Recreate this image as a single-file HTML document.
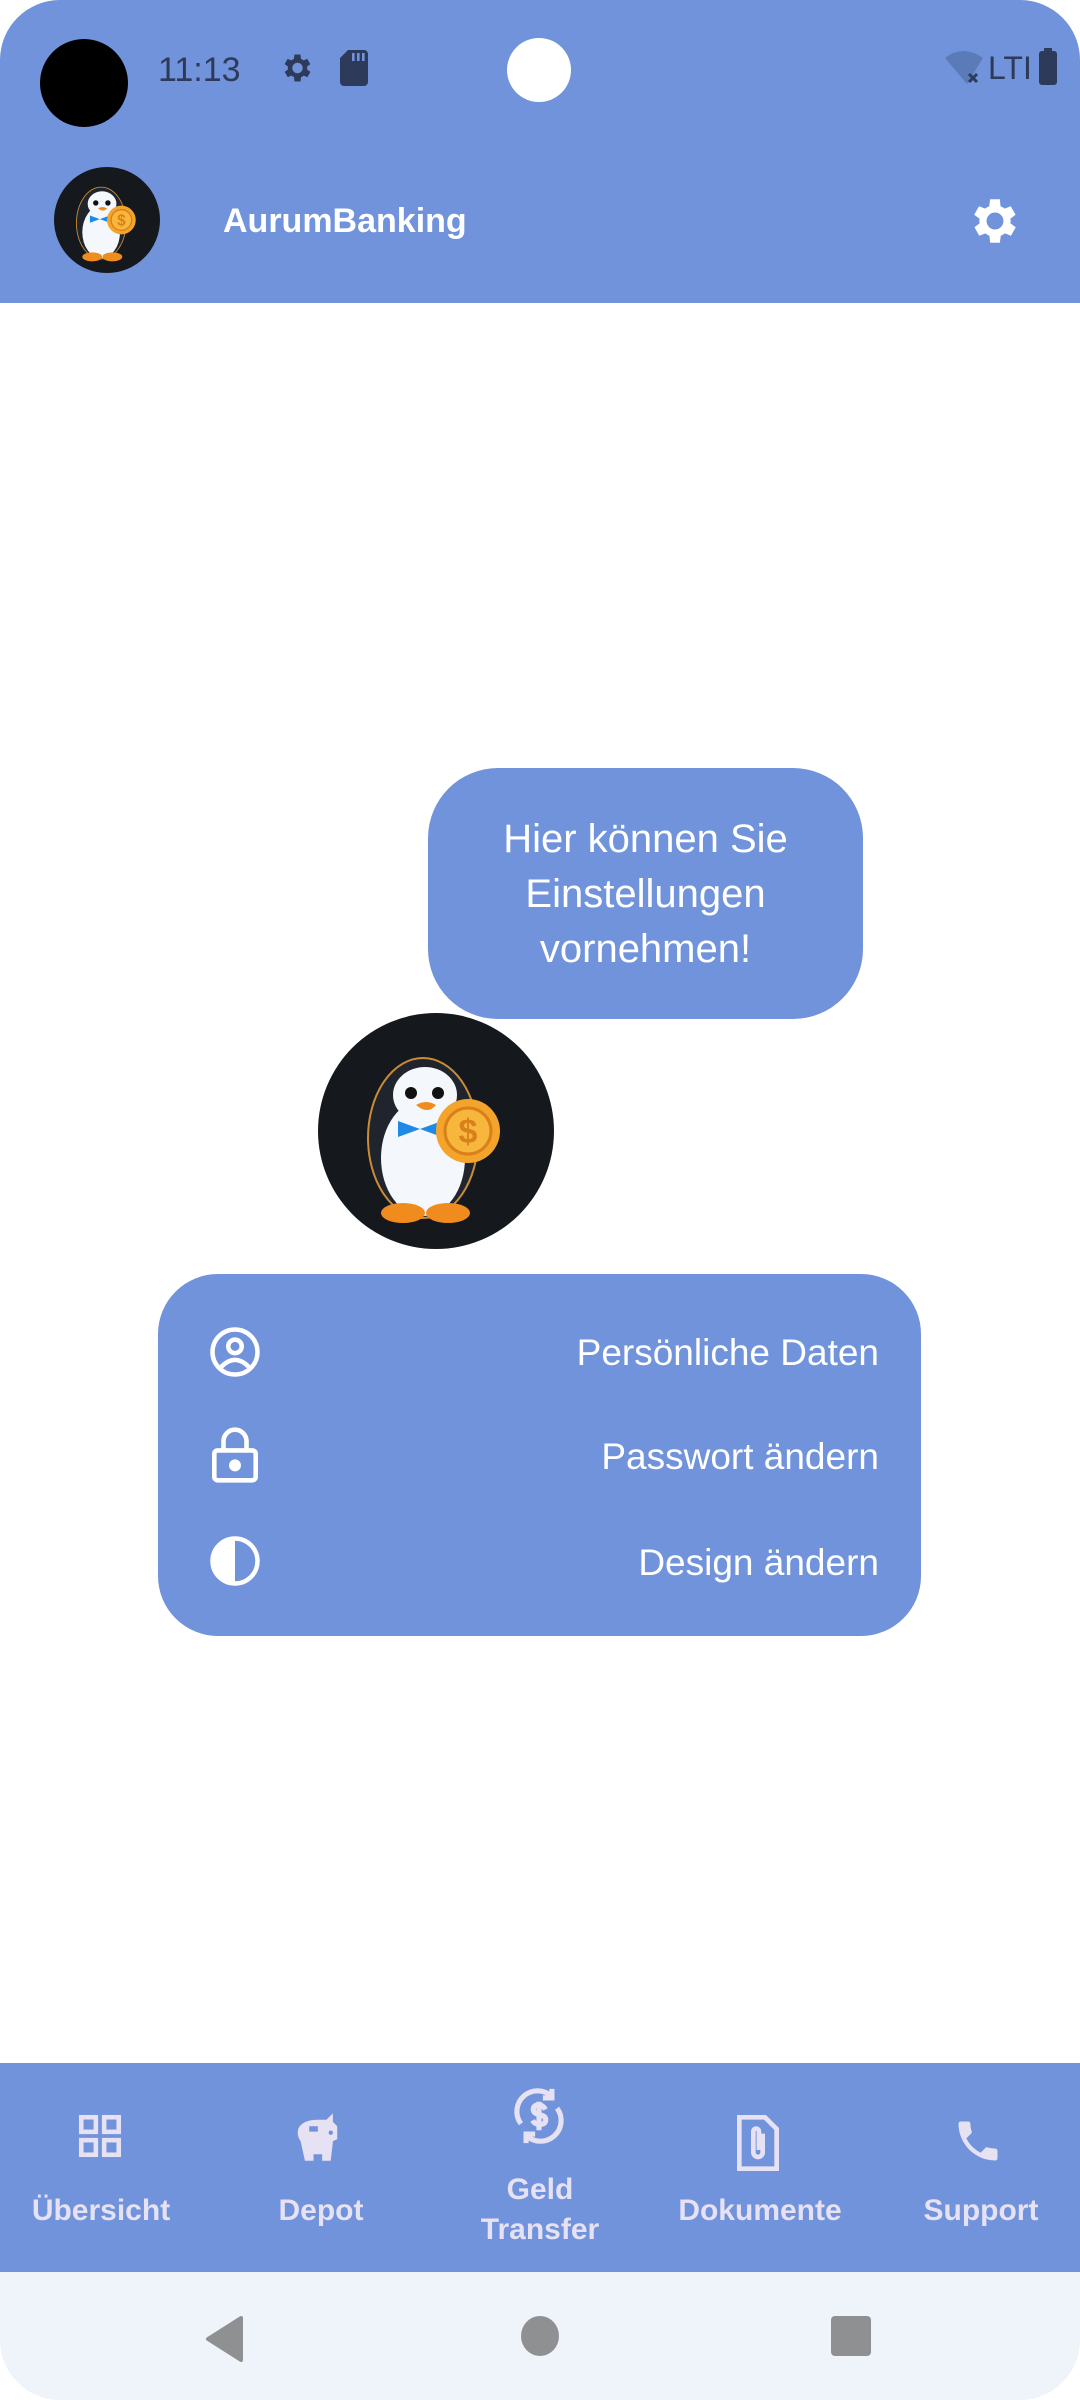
<!DOCTYPE html>
<html><head><meta charset="utf-8"><style>
*{margin:0;padding:0;box-sizing:border-box}
body{width:1080px;height:2400px;background:#fff;position:relative;overflow:hidden;font-family:"Liberation Sans",sans-serif}
.top{position:absolute;left:0;top:0;width:1080px;height:303px;background:#7193db;border-radius:60px 60px 0 0}
.abs{position:absolute}
.bubble{left:428px;top:768px;width:435px;height:251px;background:#7193db;border-radius:70px;color:#fff;font-size:40px;line-height:55px;text-align:center;padding-top:44px}
.card{left:158px;top:1274px;width:763px;height:362px;background:#7193db;border-radius:60px}
.row{position:absolute;right:42px;color:#fff;font-size:37px;line-height:44px}
.nav{left:0;top:2063px;width:1080px;height:209px;background:#7193db}
.lbl{position:absolute;width:216px;text-align:center;color:#e6e1f3;font-size:30px;font-weight:bold;line-height:40px}
.sys{left:0;top:2272px;width:1080px;height:128px;background:#eff3fa;border-radius:0 0 60px 60px}
</style></head><body>
<div class="top"></div>
<div class="abs" style="left:40px;top:39px;width:88px;height:88px;border-radius:50%;background:#000"></div>
<div class="abs" style="left:158px;top:51px;font-size:34px;color:#2e3a5a">11:13</div>
<svg class="abs" style="left:278px;top:50px" width="36" height="36" viewBox="0 0 24 24"><path fill="#2e3a5a" d="M19.4 13a7.5 7.5 0 0 0 0-2l2.1-1.6-2-3.5-2.5 1a7 7 0 0 0-1.7-1L15 3h-4l-.4 2.9a7 7 0 0 0-1.7 1l-2.5-1-2 3.5L6.6 11a7.5 7.5 0 0 0 0 2l-2.1 1.6 2 3.5 2.5-1a7 7 0 0 0 1.7 1L11 21h4l.4-2.9a7 7 0 0 0 1.7-1l2.5 1 2-3.5zM13 15.5a3.5 3.5 0 1 1 0-7 3.5 3.5 0 0 1 0 7z"/></svg>
<svg class="abs" style="left:340px;top:50px" width="28" height="36" viewBox="0 0 14 18"><path fill="#2e3a5a" d="M4 0h8a2 2 0 0 1 2 2v14a2 2 0 0 1-2 2H2a2 2 0 0 1-2-2V4zM6 1.5v4h1.3v-4zM8.5 1.5v4h1.3v-4zM11 1.5v4h1.3v-4z"/></svg>
<div class="abs" style="left:507px;top:38px;width:64px;height:64px;border-radius:50%;background:#fff"></div>
<svg class="abs" style="left:945px;top:50px" width="40" height="36" viewBox="0 0 40 36"><path fill="#5b7ab8" d="M0 8Q18-6 38 8L22 34z"/><path stroke="#2e3a5a" stroke-width="3" d="M24 24l8 8M32 24l-8 8"/></svg>
<div class="abs" style="left:988px;top:50px;font-size:32px;color:#2e3a5a">LTI</div>
<div class="abs" style="left:1039px;top:51px;width:18px;height:34px;background:#2e3a5a;border-radius:3px"></div>
<div class="abs" style="left:1044px;top:48px;width:8px;height:5px;background:#2e3a5a"></div>

<svg class="abs" style="left:54px;top:167px" width="106" height="106" viewBox="0 0 236 236"><use href="#peng"/></svg>
<div class="abs" style="left:223px;top:202px;font-size:34px;color:#fff;font-weight:bold">AurumBanking</div>
<svg class="abs" style="left:966px;top:192px" width="58" height="58" viewBox="0 0 24 24"><path fill="#fff" d="M19.4 13a7.5 7.5 0 0 0 0-2l2.1-1.6-2-3.5-2.5 1a7 7 0 0 0-1.7-1L15 3h-4l-.4 2.9a7 7 0 0 0-1.7 1l-2.5-1-2 3.5L6.6 11a7.5 7.5 0 0 0 0 2l-2.1 1.6 2 3.5 2.5-1a7 7 0 0 0 1.7 1L11 21h4l.4-2.9a7 7 0 0 0 1.7-1l2.5 1 2-3.5zM13 15.5a3.5 3.5 0 1 1 0-7 3.5 3.5 0 0 1 0 7z" transform="translate(-1 0)"/></svg>

<div class="abs bubble">Hier können Sie<br>Einstellungen<br>vornehmen!</div>

<svg class="abs" style="left:318px;top:1013px" width="236" height="236" viewBox="0 0 236 236">
<defs><g id="peng">
<circle cx="118" cy="118" r="118" fill="#15181d"/>
<ellipse cx="105" cy="125" rx="55" ry="80" fill="#20242c" stroke="#c98a3a" stroke-width="2"/>
<ellipse cx="105" cy="145" rx="42" ry="58" fill="#f4f7fb"/>
<ellipse cx="107" cy="82" rx="32" ry="28" fill="#f4f7fb"/>
<circle cx="93" cy="80" r="6" fill="#111"/><circle cx="120" cy="80" r="6" fill="#111"/>
<path d="M98 92q10-6 20 0q-8 10-20 0z" fill="#f08c1e"/>
<path d="M80 108l22 8-22 8zM124 108l-22 8 22 8z" fill="#1e8ae6"/>
<circle cx="150" cy="118" r="32" fill="#f4a42a"/><circle cx="150" cy="118" r="23" fill="#f7b63c" stroke="#d9801a" stroke-width="3"/>
<text x="150" y="130" font-size="34" font-weight="bold" text-anchor="middle" fill="#d9801a" font-family="Liberation Sans">$</text>
<ellipse cx="85" cy="200" rx="22" ry="10" fill="#f08c1e"/><ellipse cx="130" cy="200" rx="22" ry="10" fill="#f08c1e"/>
</g></defs>
<use href="#peng"/></svg>

<div class="abs card">
<svg class="abs" style="left:50px;top:51px" width="54" height="54" viewBox="0 0 24 24" fill="none" stroke="#fff" stroke-width="2"><circle cx="12" cy="12" r="10"/><circle cx="12" cy="9.5" r="3"/><path d="M5.5 19q6.5-7 13 0"/></svg>
<div class="row" style="top:57px">Persönliche Daten</div>
<svg class="abs" style="left:54px;top:153px" width="46" height="56" viewBox="0 0 20 24" fill="none" stroke="#fff" stroke-width="2"><rect x="1" y="10" width="18" height="13" rx="1.5"/><path d="M5 10V6a5 5 0 0 1 10 0v4"/><circle cx="10" cy="16.5" r="1.6" fill="#fff"/></svg>
<div class="row" style="top:161px">Passwort ändern</div>
<svg class="abs" style="left:50px;top:260px" width="54" height="54" viewBox="0 0 24 24"><circle cx="12" cy="12" r="10" fill="none" stroke="#fff" stroke-width="2"/><path d="M12 2a10 10 0 0 0 0 20z" fill="#fff"/></svg>
<div class="row" style="top:267px">Design ändern</div>
</div>

<div class="abs nav">
<svg class="abs" style="left:75px;top:48px" width="50" height="50" viewBox="0 0 24 24" fill="none" stroke="#e6e1f3" stroke-width="2.2"><rect x="3" y="3" width="7" height="7"/><rect x="14" y="3" width="7" height="7"/><rect x="3" y="14" width="7" height="7"/><rect x="14" y="14" width="7" height="7"/></svg>
<div class="lbl" style="left:-7px;top:128px">Übersicht</div>
<svg class="abs" style="left:292px;top:48px" width="56" height="52" viewBox="0 0 26 24"><path fill="#e6e1f3" d="M3 8q2-4 9-4h4l3-3v4l2 2v6l-2 1-1 9h-4v-3h-4v3H6L4 14q-2-3-1-6z"/><rect x="8" y="7" width="4" height="2.5" fill="#7193db"/><circle cx="18" cy="10" r="1" fill="#7193db"/></svg>
<div class="lbl" style="left:213px;top:128px">Depot</div>
<svg class="abs" style="left:508px;top:22px" width="62" height="62" viewBox="0 0 24 24" fill="none" stroke="#e6e1f3" stroke-width="2"><path d="M5 15A8 8 0 0 1 17 4.5M19 9a8 8 0 0 1-12 10.5"/><path d="M17 1.5v3.5h-3.5M7 22.5v-3.5h3.5" /><path d="M14.5 9.5q-1-1.8-2.5-1.8-2.2 0-2.2 1.8 0 1.5 2.4 2t2.4 2q0 1.8-2.4 1.8-1.8 0-2.7-1.6M12 6.5v11"/></svg>
<div class="lbl" style="left:432px;top:107px">Geld<br>Transfer</div>
<svg class="abs" style="left:736px;top:52px" width="44" height="56" viewBox="0 0 18 24" fill="none" stroke="#e6e1f3" stroke-width="2"><path d="M1 1h11l5 5v17H1z"/><path d="M11 8v8a2 2 0 0 1-4 0V7a1.2 1.2 0 0 1 2.4 0v8"/></svg>
<div class="lbl" style="left:652px;top:128px">Dokumente</div>
<svg class="abs" style="left:952px;top:52px" width="52" height="52" viewBox="0 0 24 24"><path fill="#e6e1f3" d="M6.6 10.8a15 15 0 0 0 6.6 6.6l2.2-2.2a1 1 0 0 1 1-.25 11.4 11.4 0 0 0 3.6.57 1 1 0 0 1 1 1V20a1 1 0 0 1-1 1A17 17 0 0 1 3 4a1 1 0 0 1 1-1h3.5a1 1 0 0 1 1 1c0 1.25.2 2.45.57 3.57a1 1 0 0 1-.25 1z"/></svg>
<div class="lbl" style="left:873px;top:128px">Support</div>
</div>

<div class="abs sys">
<svg class="abs" style="left:205px;top:44px" width="40" height="46" viewBox="0 0 40 46"><path d="M36 2L3 23l33 21z" fill="#8f9092" stroke="#8f9092" stroke-width="4" stroke-linejoin="round"/></svg>
<div class="abs" style="left:521px;top:44px;width:38px;height:40px;border-radius:50%;background:#8f9092"></div>
<div class="abs" style="left:831px;top:44px;width:40px;height:40px;border-radius:4px;background:#8f9092"></div>
</div>
</body></html>
